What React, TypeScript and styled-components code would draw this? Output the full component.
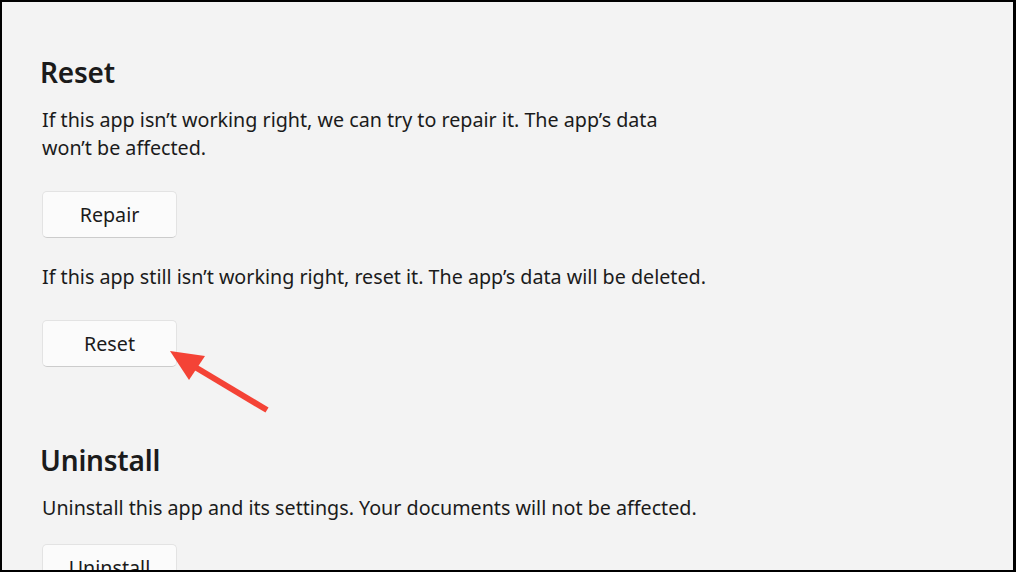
import styled, { createGlobalStyle } from "styled-components";

const GlobalStyle = createGlobalStyle`
    html, body {
        margin: 0;
        padding: 0;
        background: #000;
    }
    * {
        box-sizing: border-box;
    }
`;

const Frame = styled.div`
    position: relative;
    width: 1016px;
    height: 572px;
    overflow: hidden;
    background-color: #f3f3f3;
    border-style: solid;
    border-color: #000;
    border-width: 2px 3px 2px 2px;
    font-family: "Noto Sans", "Open Sans", sans-serif;
    color: #1b1b1b;
`;

const Contents = styled.div`
    padding: 50px 0 0 38px;
    display: flex;
    flex-direction: column;
`;

const Section = styled.section<{ gapTop?: number }>`
    display: flex;
    flex-direction: column;
    align-items: flex-start;
    margin-top: ${(props) => props.gapTop ?? 0}px;
`;

const Heading = styled.h2`
    margin: 0 0 14px 0;
    font-size: 28px;
    font-weight: 600;
    line-height: 40px;
    letter-spacing: -0.2px;
`;

const Letter = styled.p<{ wide?: boolean; gapTop?: number }>`
    margin: ${(props) => props.gapTop ?? 0}px 0 0 2px;
    max-width: ${(props) => (props.wide ? "none" : "650px")};
    font-size: 19.7px;
    line-height: 28px;
    font-weight: 400;
`;

const Button = styled.button<{ gapTop?: number }>`
    margin: ${(props) => props.gapTop ?? 29}px 0 0 2px;
    width: 135px;
    height: 47px;
    border-radius: 5px;
    border: 1px solid #e3e3e3;
    border-bottom-color: #cccccc;
    background-color: #fbfbfb;
    font-family: inherit;
    font-size: 19.7px;
    color: #1b1b1b;
    cursor: pointer;
`;

const Arrow = styled.svg`
    position: absolute;
    left: 0;
    top: 0;
    pointer-events: none;
`;

const App: React.FC = () => {
    return (
        <>
            <GlobalStyle />
            <Frame>
                <Contents>
                    <Section>
                        <Heading>Reset</Heading>
                        <Letter>
                            If this app isn’t working right, we can try to repair it. The app’s data
                            won’t be affected.
                        </Letter>
                        <Button>Repair</Button>
                        <Letter wide gapTop={25}>
                            If this app still isn’t working right, reset it. The app’s data will be deleted.
                        </Letter>
                        <Button>Reset</Button>
                    </Section>
                    <Section gapTop={73}>
                        <Heading>Uninstall</Heading>
                        <Letter wide>
                            Uninstall this app and its settings. Your documents will not be affected.
                        </Letter>
                        <Button gapTop={22}>Uninstall</Button>
                    </Section>
                </Contents>
                <Arrow width="1016" height="572" viewBox="0 0 1016 572">
                    <line x1="265" y1="408" x2="188" y2="362" stroke="#f44336" strokeWidth="6" />
                    <polygon points="168,349 203,354 187,378" fill="#f44336" />
                </Arrow>
            </Frame>
        </>
    );
};

export default App;
